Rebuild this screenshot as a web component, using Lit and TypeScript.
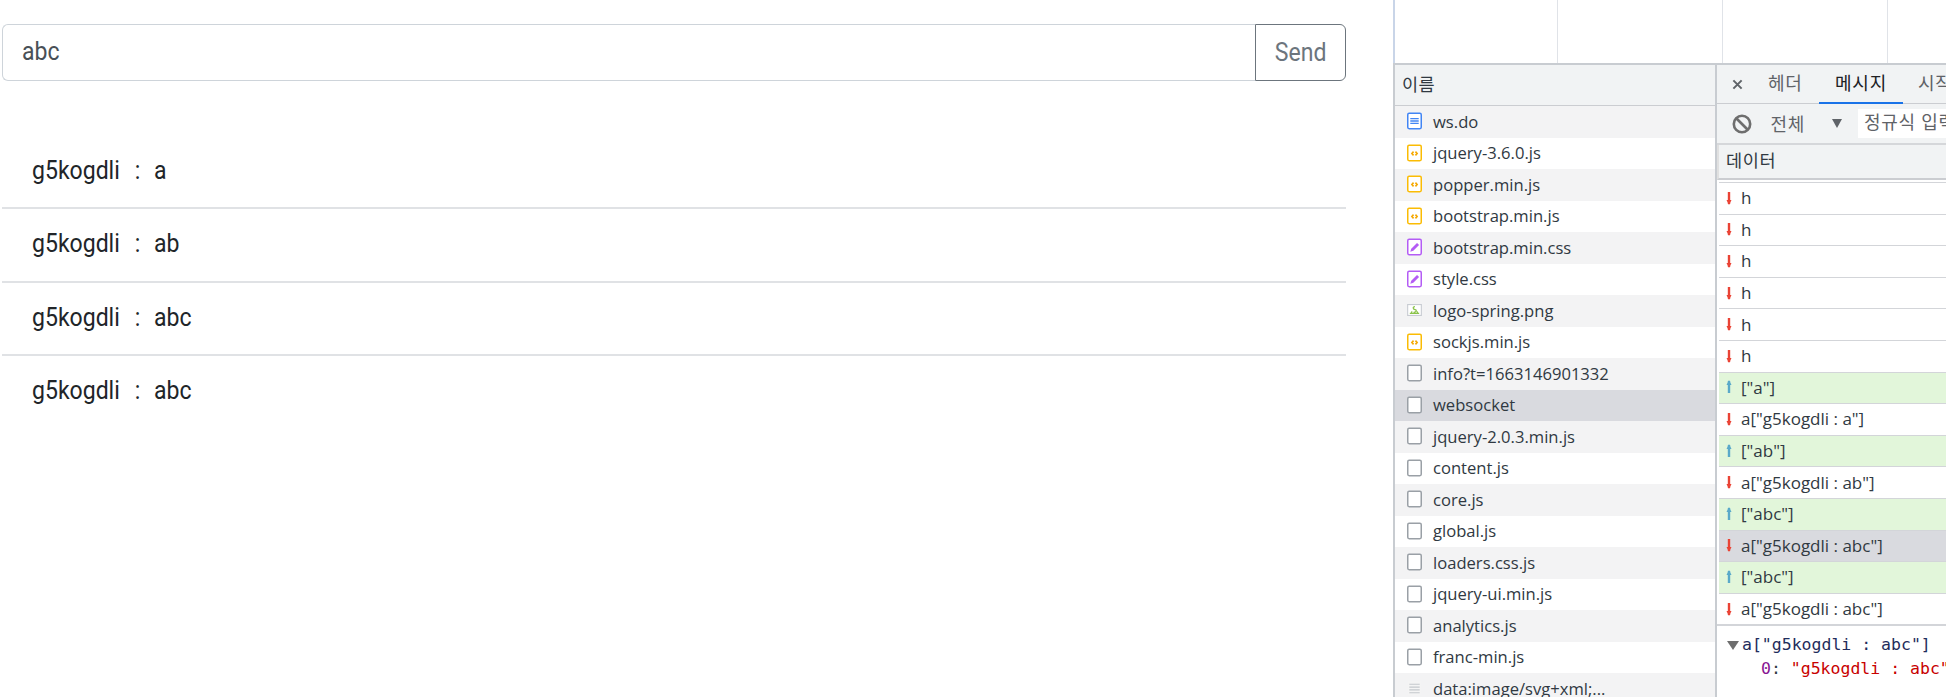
import { LitElement, html, css, svg } from "lit";
import { customElement } from "lit/decorators.js";

type Kind = "doc" | "js" | "css" | "img" | "blank" | "data";
const files: [string, Kind][] = [
  ["ws.do", "doc"], ["jquery-3.6.0.js", "js"], ["popper.min.js", "js"], ["bootstrap.min.js", "js"],
  ["bootstrap.min.css", "css"], ["style.css", "css"], ["logo-spring.png", "img"], ["sockjs.min.js", "js"],
  ["info?t=1663146901332", "blank"], ["websocket", "blank"], ["jquery-2.0.3.min.js", "blank"], ["content.js", "blank"],
  ["core.js", "blank"], ["global.js", "blank"], ["loaders.css.js", "blank"], ["jquery-ui.min.js", "blank"],
  ["analytics.js", "blank"], ["franc-min.js", "blank"], ["data:image/svg+xml;...", "data"],
];
const msgs: [string, "up" | "down", boolean?][] = [
  ["h", "down"], ["h", "down"], ["h", "down"], ["h", "down"], ["h", "down"], ["h", "down"],
  ['["a"]', "up"], ['a["g5kogdli : a"]', "down"], ['["ab"]', "up"], ['a["g5kogdli : ab"]', "down"],
  ['["abc"]', "up"], ['a["g5kogdli : abc"]', "down", true], ['["abc"]', "up"], ['a["g5kogdli : abc"]', "down"],
];

function fileIcon(k: Kind) {
  const colors: Record<Kind, string> = { doc: "#4285f4", js: "#fbbc04", css: "#b45cf5", img: "#c8ccd2", blank: "#9aa0a6", data: "#c4c7cb" };
  const c = colors[k];
  let inner = svg``;
  if (k === "doc") inner = svg`<path d="M3.500 6.500h9M3.500 9h9M3.500 11.500h9" stroke="${c}" stroke-width="1.400" fill="none"/>`;
  if (k === "js") inner = svg`<path d="M7 7.500 5.200 9.500 7 11.500M9 7.500l1.800 2L9 11.500" stroke="#f5a800" stroke-width="1.700" fill="none"/>`;
  if (k === "css") inner = svg`<path d="M3.500 14l1-3.200 6.200-6.200 2.200 2.200-6.200 6.200z" fill="${c}"/>`;
  if (k === "img") inner = svg`<path d="M3 12.500h10M8.500 5.500c-2.500 0-2.500 2.500 0 3s1.500 3-1.500 3M4.500 12l1-1.500M11.500 12l-1-1.500" stroke="#8bc34a" stroke-width="1.300" fill="none"/>`;
  if (k === "data") {
    return html`<svg class="fi" width="15" height="18" viewBox="0 0 16 18"><rect x=".5" y="2" width="15" height="14" fill="#f4f4f4"/><path d="M2.500 5h11M2.500 8h11M2.500 11h11M2.500 14h11" stroke="${c}" stroke-width="1.200"/></svg>`;
  }
  if (k === "img") {
    return html`<svg class="fi" width="15" height="18" viewBox="0 0 16 18"><rect x=".7" y="3.200" width="14.600" height="11.600" fill="#fff" stroke="${c}" stroke-width="1.200"/>${inner}</svg>`;
  }
  return html`<svg class="fi" width="15" height="18" viewBox="0 0 16 18"><rect x=".8" y=".8" width="14.400" height="16.400" rx="1.500" fill="#fff" stroke="${c}" stroke-width="1.600"/>${inner}</svg>`;
}

function arrow(dir: "up" | "down") {
  const c = dir === "up" ? "#5aa9c9" : "#ea4335";
  const d = dir === "up" ? "M1.500 6 4 1l2.500 5z" : "M1.500 10 4 15l2.500-5z";
  return html`<svg class="ar" width="8" height="16" viewBox="0 0 8 16"><path d="M4 2v12" stroke="${c}" stroke-width="2.400"/><path d="${d}" fill="${c}"/></svg>`;
}

@customElement("app-root")
export class AppRoot extends LitElement {
  static styles = css`
    :host { display: grid; grid-template-columns: 1393px 1fr; height: 697px; width: 1946px; overflow: hidden; background: #fff; font-family: "Open Sans", "Noto Sans CJK KR", sans-serif; color: #303942; }
    .page { padding: 24px 47px 0 2px; font-family: Roboto, "Liberation Sans", sans-serif; }
    .group { display: flex; height: 57px; }
    .input { flex: 1; border: 1px solid #ced4da; border-right: 0; border-radius: 6px 0 0 6px; padding: 0 0 4px 19px; font-size: 25.600px; color: #495057; display: flex; align-items: center; }
    .send { width: 91px; box-sizing: border-box; border: 1px solid #6c757d; border-radius: 0 6px 6px 0; color: #6c757d; font-size: 25.600px; padding-bottom: 2px; display: flex; align-items: center; justify-content: center; }
    .cond { display: inline-block; transform: scaleX(0.9); transform-origin: left center; white-space: pre; }
    .send .cond { transform-origin: center; }
    .colon { display: inline-block; margin: 0 15.200px 0 16.500px; }
    .chat { margin-top: 54.500px; }
    .chat div { height: 71.500px; box-sizing: border-box; margin-bottom: 2px; box-shadow: 0 2px 0 #e0e2e5; padding: 0 0 3px 30px; font-size: 25.600px; color: #212529; display: flex; align-items: center; }
    .chat div:last-child { box-shadow: none; }

    .dev { font-size: 16.600px; display: flex; flex-direction: column; min-width: 0; height: 697px; }
    .grid { height: 63px; flex: none; display: flex; border-left: 2px solid #c9d5e8; }
    .grid i { width: 165px; flex: none; border-right: 1px solid #e0e3e8; box-sizing: border-box; }
    .grid i:first-child { width: 163px; }
    .net { display: flex; border-top: 2px solid #c8ccd1; flex: 1; min-height: 0; }
    .names { width: 320px; flex: none; border-left: 2px solid #c8ccd1; border-right: 2px solid #c8ccd1; overflow: hidden; }
    .nhead { height: 40px; box-sizing: content-box; background: #f1f3f4; border-bottom: 1px solid #cbcdd1; padding-left: 7px; display: flex; align-items: center; font-size: 17.500px; letter-spacing: .4px; }
    .nhead span { margin-bottom: 4px; }
    .nrow { height: 31.500px; box-sizing: border-box; display: flex; align-items: center; padding: 0 0 1px 12px; gap: 11px; white-space: nowrap; }
    .nrow:nth-child(odd) { background: #f3f3f4; }
    .nrow.sel { background: #d9dadf; }
    .fi { flex: none; }
    .side { flex: 1; min-width: 0; display: flex; flex-direction: column; overflow: hidden; font-size: 17px; }
    .tabs { height: 38px; background: #f1f3f4; border-bottom: 1px solid #cbcdd1; display: flex; align-items: stretch; flex: none; white-space: nowrap; font-size: 18px; letter-spacing: .7px; }
    .x { width: 40px; display: flex; align-items: center; justify-content: center; flex: none; }
    .tab { display: flex; align-items: center; color: #5f6368; padding: 0 0 4px 15px; }
    .tab.first { padding-left: 11px; width: 62px; box-sizing: border-box; flex: none; }
    .tab.on { color: #202124; box-shadow: 0 1px 0 #1a73e8, inset 0 -1px 0 #1a73e8; width: 84px; box-sizing: border-box; justify-content: center; padding: 0 0 4px; flex: none; }
    .tool { height: 39px; background: #f1f3f4; border-bottom: 2px solid #d5d7da; display: flex; align-items: center; flex: none; white-space: nowrap; font-size: 18px; letter-spacing: .7px; }
    .tool svg { margin-left: 14.500px; flex: none; }
    .all { color: #5f6368; margin: 0 0 2px 19px; }
    .tri { width: 0; height: 0; border: 5.500px solid transparent; border-top: 9px solid #5f6368; border-bottom: 0; margin-left: 27px; flex: none; }
    .rx { background: #fff; margin-left: 16px; padding: 0 6px; height: 29px; line-height: 27px; color: #5f6368; flex: 1; overflow: hidden; }
    .dhead { height: 31px; background: #f1f3f4; border-left: 2px solid #e0e0e0; border-bottom: 2px solid #cbcdd1; padding: 0 0 2px 7px; box-sizing: content-box; display: flex; align-items: center; flex: none; margin-bottom: 2px; font-size: 17.500px; letter-spacing: .6px; }
    .dhead span { margin-bottom: 2px; }
    .msg { height: 31.600px; box-sizing: border-box; border-top: 1px solid #d3d5d9; margin-left: 2px; display: flex; align-items: center; padding: 0 0 1px 6px; gap: 8px; white-space: nowrap; flex: none; }
    .msg.up { background: #e2f6da; }
    .msg.sel { background: #d9dadf; }
    .ar { flex: none; }
    .detail { border-top: 2px solid #d3d5d9; padding: 7px 0 0 10px; font-family: "DejaVu Sans Mono", monospace; font-size: 16.500px; line-height: 24px; white-space: pre; flex: 1; }
    .detail .l { display: flex; align-items: center; gap: 3px; }
    .tr { width: 0; height: 0; border: 6px solid transparent; border-top: 9px solid #6e6e6e; border-bottom: 0; }
    .nav { color: #1f2d5c; }
    .idx { padding-left: 34px; }
    .k { color: #881391; }
    .v { color: #c80000; }
  `;

  render() {
    return html`
      <section class="page">
        <div class="group">
          <div class="input"><span class="cond">abc</span></div>
          <div class="send"><span class="cond">Send</span></div>
        </div>
        <div class="chat">
          ${["a", "ab", "abc", "abc"].map((t) => html`<div><span class="cond">g5kogdli<span class="colon">:</span>${t}</span></div>`)}
        </div>
      </section>
      <section class="dev">
        <div class="grid"><i></i><i></i><i></i><i></i></div>
        <div class="net">
          <div class="names">
            <div class="nhead"><span>이름</span></div>
            <div class="list">
              ${files.map(([n, k]) => html`<div class="nrow ${n === "websocket" ? "sel" : ""}">${fileIcon(k)}<span>${n}</span></div>`)}
            </div>
          </div>
          <div class="side">
            <div class="tabs">
              <div class="x"><svg width="11" height="11" viewBox="0 0 12 12"><path d="M1.500 1.500l9 9M10.500 1.500l-9 9" stroke="#5f6368" stroke-width="2.200"/></svg></div>
              <div class="tab first">헤더</div>
              <div class="tab on">메시지</div>
              <div class="tab">시작</div>
            </div>
            <div class="tool">
              <svg width="20" height="20" viewBox="0 0 20 20"><circle cx="10" cy="10" r="8.200" fill="none" stroke="#6e6e6e" stroke-width="2.600"/><path d="M4.500 4.500l11 11" stroke="#6e6e6e" stroke-width="2.600"/></svg>
              <span class="all">전체</span><span class="tri"></span>
              <span class="rx">정규식 입력</span>
            </div>
            <div class="dhead"><span>데이터</span></div>
            ${msgs.map(([t, d, s]) => html`<div class="msg ${d} ${s ? "sel" : ""}">${arrow(d)}<span>${t}</span></div>`)}
            <div class="detail"><div class="l"><span class="tr"></span><span class="nav">a["g5kogdli : abc"]</span></div><div class="idx"><span class="k">0</span>: <span class="v">"g5kogdli : abc"</span></div></div>
          </div>
        </div>
      </section>
    `;
  }
}
